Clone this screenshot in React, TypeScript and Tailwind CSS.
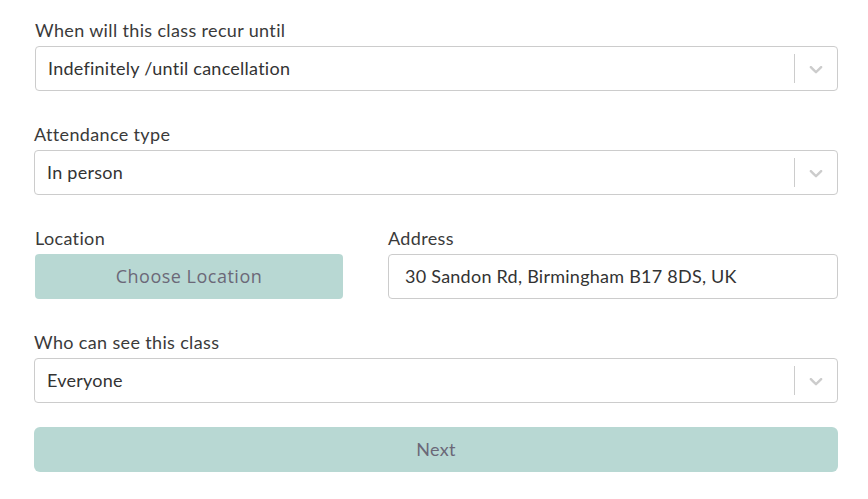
import React from "react";

const Chevron = () => (
  <svg width="22" height="22" viewBox="0 0 20 20" className="fill-[#cccccc]">
    <path d="M4.516 7.548c0.436-0.446 1.043-0.481 1.576 0l3.908 3.747 3.908-3.747c0.533-0.481 1.141-0.446 1.574 0 0.436 0.445 0.408 1.197 0 1.615-0.406 0.418-4.695 4.502-4.695 4.502-0.217 0.223-0.502 0.335-0.787 0.335s-0.57-0.112-0.789-0.335c0 0-4.287-4.084-4.695-4.502s-0.436-1.17 0-1.615z" />
  </svg>
);

const Select = ({ value }: { value: string }) => (
  <div className="flex h-[45px] items-center rounded-[4px] border border-[#cccccc] bg-white">
    <div className="flex-1 pl-[12px] text-[18px] tracking-[0.25px] text-[#333333]">{value}</div>
    <span className="h-[29px] w-px bg-[#cccccc]" />
    <div className="flex w-[42px] items-center justify-center pr-[1px]">
      <Chevron />
    </div>
  </div>
);

const Label = ({ children }: { children: React.ReactNode }) => (
  <div className="h-[26px] text-[18px] leading-[26px] tracking-[0.35px] text-[#3a3a3a]">{children}</div>
);

export default function App() {
  return (
    <div
      className="h-[499px] w-[868px] bg-white pl-[34px] pr-[30px] pt-[17px]"
      style={{ fontFamily: "Lato, 'Open Sans', sans-serif" }}
    >
      <div className="pl-[1px]">
        <Label>When will this class recur until</Label>
        <div className="mt-[3px]">
          <Select value="Indefinitely /until cancellation" />
        </div>
      </div>

      <div className="mt-[30px]">
        <Label>Attendance type</Label>
        <div className="mt-[3px]">
          <Select value="In person" />
        </div>
      </div>

      <div className="mt-[30px] grid grid-cols-[309px_1fr] gap-x-[45px]">
        <div className="pl-[1px]">
          <Label>Location</Label>
          <button
            className="mt-[3px] h-[45px] w-[308px] rounded-[4px] bg-[#b8d8d3] text-[18px] tracking-[0.5px] text-[#6b6878]"
            style={{ fontFamily: "'Open Sans', sans-serif" }}
          >
            Choose Location
          </button>
        </div>
        <div>
          <Label>Address</Label>
          <div className="mt-[3px] flex h-[45px] items-center rounded-[4px] border border-[#cccccc] bg-white pl-[16px] text-[18px] tracking-[0.25px] text-[#333333]">
            30 Sandon Rd, Birmingham B17 8DS, UK
          </div>
        </div>
      </div>

      <div className="mt-[30px]">
        <Label>Who can see this class</Label>
        <div className="mt-[3px]">
          <Select value="Everyone" />
        </div>
      </div>

      <button
        className="mt-[24px] h-[45px] w-full rounded-[6px] bg-[#b8d8d3] text-[18px] tracking-[0.25px] text-[#6b6878]"
        style={{ fontFamily: "Lato, sans-serif" }}
      >
        Next
      </button>
    </div>
  );
}
